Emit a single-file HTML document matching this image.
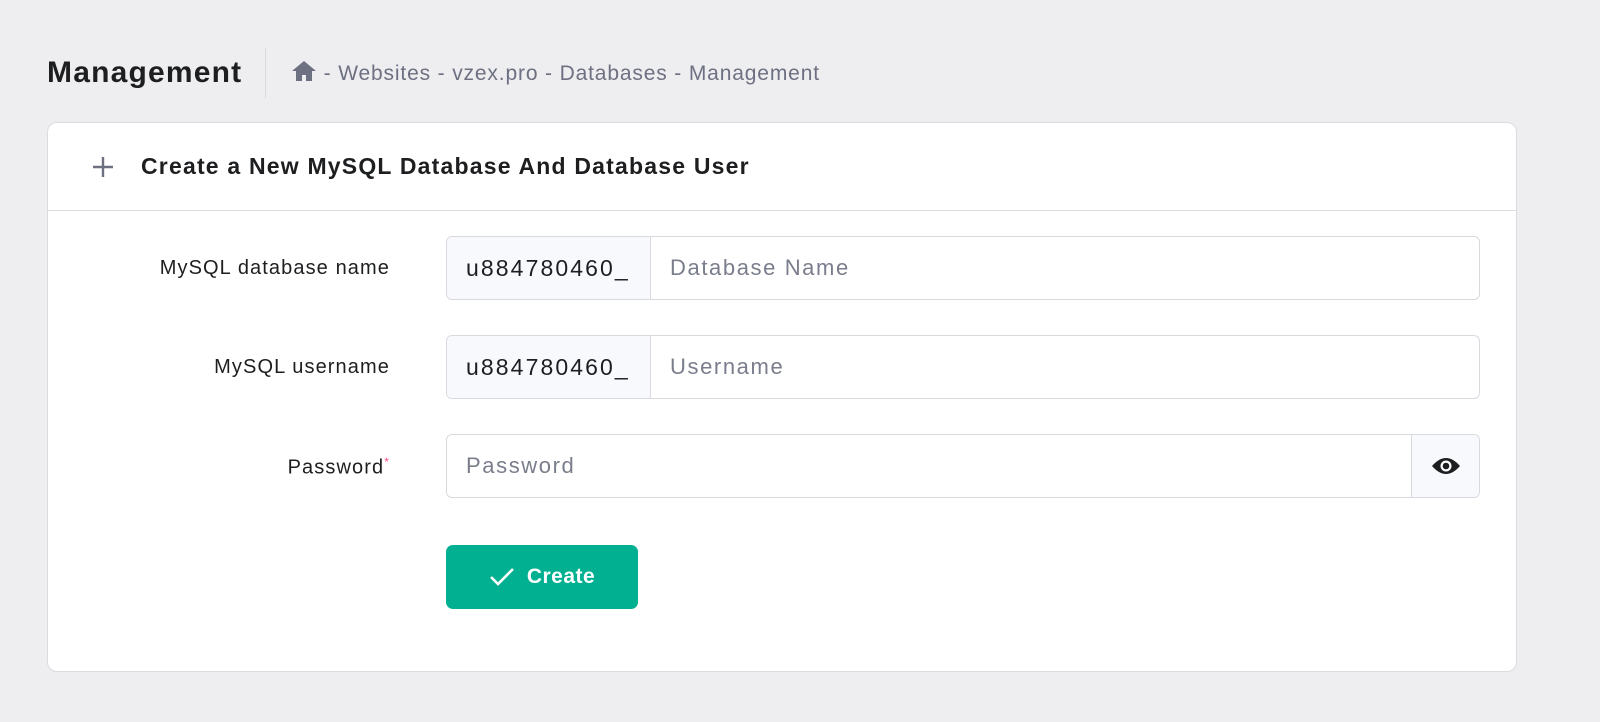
<!DOCTYPE html>
<html><head><style>
*{box-sizing:border-box;margin:0;padding:0}
body{width:1600px;height:722px;background:#eeeef1;font-family:"Liberation Sans",sans-serif;position:relative;overflow:hidden;color:#1d1e20}
.abs{position:absolute}
.h1{left:47px;top:56px;font-size:30px;font-weight:bold;letter-spacing:1.2px}
.sep{left:265px;top:48px;width:1px;height:50px;background:#d8dae0}
.bc{left:291px;top:60px;font-size:21px;color:#6d7081;letter-spacing:0.85px}
.card{left:47px;top:122px;width:1470px;height:550px;background:#fff;border:1px solid #dadce0;border-radius:10px}
.hdr{left:0;top:0;width:100%;height:88px;border-bottom:1px solid #dadce0}
.title{left:93px;top:30px;font-size:23px;font-weight:bold;letter-spacing:1.2px}
.lbl{font-size:20px;text-align:right;width:342px;left:0;letter-spacing:1.1px}
.inp{left:398px;width:1034px;height:64px;border:1px solid #d8dae0;border-radius:6px;display:flex;font-size:22px;overflow:hidden}
.pre{width:204px;background:#f8f9fc;border-right:1px solid #d8dae0;display:flex;align-items:center;padding-left:19px;color:#1d1e20;font-size:23px;letter-spacing:2.1px}
.ph{color:#7a7d8c;display:flex;align-items:center;padding-left:19px;flex:1;letter-spacing:1.6px}
.eye{width:68px;background:#f8f9fc;border-left:1px solid #d8dae0;display:flex;align-items:center;justify-content:center}
.btn{left:398px;top:422px;width:192px;height:64px;background:#00b090;border-radius:7px;color:#fff;font-weight:bold;font-size:21px;display:flex;align-items:center;justify-content:center;gap:12px;letter-spacing:0.5px}
</style></head><body>
<div class="abs h1">Management</div>
<div class="abs sep"></div>
<div class="abs bc"><svg width="26" height="22" viewBox="0 0 26 22" style="vertical-align:-2px"><path d="M13 1 L1 11 H5 V21 H11 V15 H15 V21 H21 V11 H25 Z" fill="#6d7081"/></svg> - Websites - vzex.pro - Databases - Management</div>
<div class="abs card">
 <div class="abs hdr">
  <svg class="abs" style="left:44px;top:33px" width="22" height="22"><path d="M11 1V21M1 11H21" stroke="#6d7081" stroke-width="2.4"/></svg>
  <div class="abs title">Create a New MySQL Database And Database User</div>
 </div>
 <div class="abs lbl" style="top:134px">MySQL database name</div>
 <div class="abs inp" style="top:113px"><div class="pre">u884780460_</div><div class="ph">Database Name</div></div>
 <div class="abs lbl" style="top:233px">MySQL username</div>
 <div class="abs inp" style="top:212px"><div class="pre">u884780460_</div><div class="ph">Username</div></div>
 <div class="abs lbl" style="top:332px">Password<sup style="color:#fc5185;font-size:12px">*</sup></div>
 <div class="abs inp" style="top:311px"><div class="ph">Password</div><div class="eye"><svg width="30" height="20" viewBox="0 0 30 20"><path d="M1 10 Q15 -6 29 10 Q15 26 1 10Z" fill="#1d1e20"/><circle cx="15" cy="10" r="5.5" fill="#fff"/><circle cx="15" cy="10" r="3.3" fill="#1d1e20"/></svg></div></div>
 <div class="abs btn"><svg width="26" height="20"><path d="M2 10L9 17L24 2" stroke="#fff" stroke-width="2.6" fill="none"/></svg>Create</div>
</div>
</body></html>
